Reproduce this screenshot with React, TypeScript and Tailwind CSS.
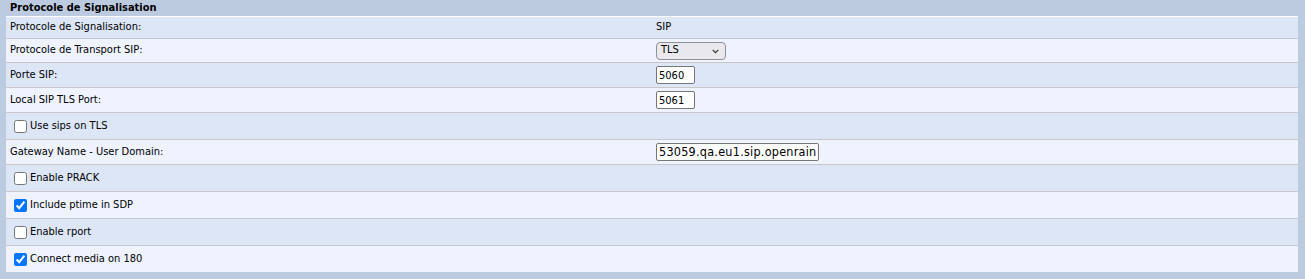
import React from "react";

type Row =
  | { kind: "text"; label: string; value: string; h: number }
  | { kind: "select"; label: string; value: string; h: number }
  | { kind: "input"; label: string; value: string; w: number; h: number; big?: boolean }
  | { kind: "check"; label: string; checked: boolean; h: number };

const rows: Row[] = [
  { kind: "text", label: "Protocole de Signalisation:", value: "SIP", h: 22 },
  { kind: "select", label: "Protocole de Transport SIP:", value: "TLS", h: 24 },
  { kind: "input", label: "Porte SIP:", value: "5060", w: 39, h: 25 },
  { kind: "input", label: "Local SIP TLS Port:", value: "5061", w: 39, h: 25 },
  { kind: "check", label: "Use sips on TLS", checked: false, h: 27 },
  { kind: "input", label: "Gateway Name - User Domain:", value: "53059.qa.eu1.sip.openrainbow.io", w: 163, h: 25, big: true },
  { kind: "check", label: "Enable PRACK", checked: false, h: 27 },
  { kind: "check", label: "Include ptime in SDP", checked: true, h: 27 },
  { kind: "check", label: "Enable rport", checked: false, h: 27 },
  { kind: "check", label: "Connect media on 180", checked: true, h: 27 },
];

export default function App() {
  return (
    <div
      className="w-[1305px] h-[279px] bg-[#bccbdf] text-[11px] text-black"
      style={{ fontFamily: '"DejaVu Sans Condensed", "DejaVu Sans", sans-serif' }}
    >
      <div className="ml-[6px] mr-[7px] flex flex-col">
        <div className="h-[16px] flex items-center pl-[4px] font-bold">Protocole de Signalisation</div>
        {rows.map((r, i) => (
          <div
            key={i}
            className={`flex items-center border-t ${i === 0 ? "border-white" : "border-[#c8c8c8]"} ${
              i % 2 === 0 ? "bg-[#dce6f7]" : "bg-[#eef3ff]"
            }`}
            style={{ height: r.h }}
          >
            {r.kind === "check" ? (
              <label className="flex items-center pl-[8px]">
                <input
                  type="checkbox"
                  defaultChecked={r.checked}
                  className="w-[13px] h-[13px] m-0 mr-[3px] accent-[#0075ff]"
                />
                <span>{r.label}</span>
              </label>
            ) : (
              <>
                <div className="w-[650px] pl-[4px] shrink-0">{r.label}</div>
                <div className="flex items-center">
                  {r.kind === "text" && <span>{r.value}</span>}
                  {r.kind === "select" && (
                    <div className="relative w-[70px] h-[18px] rounded-[4px] border border-[#8f8f9d] bg-[#e9e9ed] flex items-center pl-[4px]">
                      <span>{r.value}</span>
                      <svg
                        className="absolute right-[6px] top-[6px]"
                        width="7"
                        height="5"
                        viewBox="0 0 7 5"
                        fill="none"
                        stroke="#3b3b3b"
                        strokeWidth="1.2"
                      >
                        <path d="M0.8 1 L3.5 3.7 L6.2 1" />
                      </svg>
                    </div>
                  )}
                  {r.kind === "input" && (
                    <input
                      type="text"
                      defaultValue={r.value}
                      className={`h-[18px] border border-[#767676] rounded-[2px] bg-white px-[2px] outline-none ${
                        r.big ? "text-[12.5px] tracking-[0.25px]" : ""
                      }`}
                      style={{ width: r.w }}
                    />
                  )}
                </div>
              </>
            )}
          </div>
        ))}
      </div>
    </div>
  );
}
